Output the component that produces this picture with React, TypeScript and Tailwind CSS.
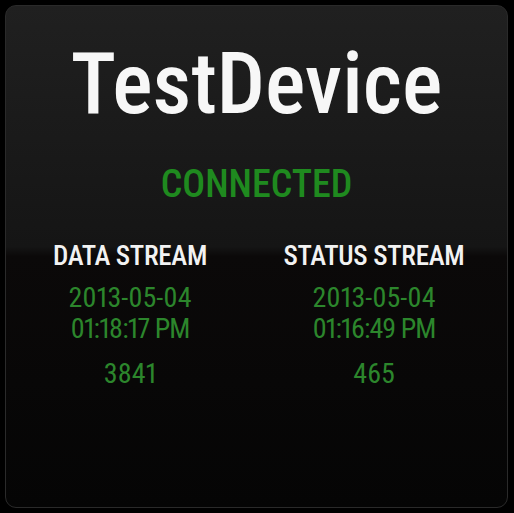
export default function App() {
  const streams = [
    { label: 'DATA STREAM', date: '2013-05-04', time: '01:18:17 PM', count: '3841' },
    { label: 'STATUS STREAM', date: '2013-05-04', time: '01:16:49 PM', count: '465' },
  ]

  return (
    <div className="h-[513px] w-[514px] bg-black p-[5px] pr-[6px] font-['Roboto_Condensed',sans-serif]">
      <div className="flex h-[503px] flex-col items-center overflow-hidden rounded-[11px] border border-[#2a2a2a] bg-[linear-gradient(to_bottom,#202020_0%,#151515_48%,#0b0909_50%,#050505_100%)]">
        <h1 className="mt-[36px] text-[85px] leading-[84px] font-medium text-[#f7f7f7]">TestDevice</h1>
        <div className="mt-[39px] text-[38px] leading-[38px] font-medium text-[#1f8a1f]">CONNECTED</div>
        <div className="mt-[39px] grid w-full grid-cols-[244px_244px] pl-[2px]">
          {streams.map((s) => (
            <div key={s.label} className="flex flex-col items-center proportional-nums">
              <div className="text-[27px] leading-[28px] font-medium tracking-[-0.3px] text-[#f2f2f2]">{s.label}</div>
              <div className="mt-[12px] text-[28px] leading-[31px] text-[#2c862c]">{s.date}</div>
              <div className="text-[28px] leading-[31px] tracking-[-1px] text-[#2c862c]">{s.time}</div>
              <div className="mt-[14px] text-[28px] leading-[31px] text-[#2c862c]">{s.count}</div>
            </div>
          ))}
        </div>
      </div>
    </div>
  )
}
